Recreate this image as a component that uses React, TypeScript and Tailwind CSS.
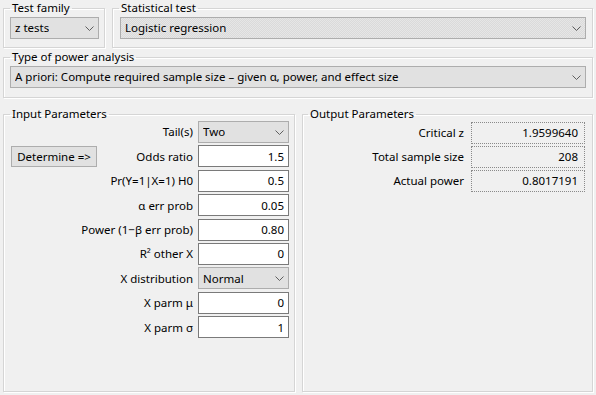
import React from "react";

const font = { fontFamily: '"Noto Sans", "Open Sans", sans-serif' };

function Chevron() {
  return (
    <svg width="9" height="5" viewBox="0 0 9 5" className="shrink-0">
      <polyline points="0.5,0.5 4.5,4.5 8.5,0.5" fill="none" stroke="#5f5f5f" strokeWidth="1" />
    </svg>
  );
}

function Combo({ text, textured, className }: { text: string; textured?: boolean; className?: string }) {
  return (
    <div
      className={
        "flex h-[22px] items-center justify-between border border-[#adadad] pl-[4px] pr-[4px] text-black " +
        (textured
          ? "bg-[repeating-conic-gradient(#e6e6e6_0_25%,#dadada_0_50%)] bg-[length:2px_2px] "
          : "bg-[#e1e1e1] ") +
        (className ?? "")
      }
    >
      <span className="truncate">{text}</span>
      <Chevron />
    </div>
  );
}

function Group({
  title,
  className,
  legendClass,
  children,
}: {
  title: string;
  className?: string;
  legendClass?: string;
  children: React.ReactNode;
}) {
  return (
    <fieldset
      className={
        "min-w-0 border border-[#d5d5d5] shadow-[1px_1px_0_#ffffff,inset_1px_1px_0_#ffffff] " + (className ?? "")
      }
    >
      <legend className={"px-[2px] leading-[16px] text-black " + (legendClass ?? "")}>{title}</legend>
      {children}
    </fieldset>
  );
}

function Field({ value }: { value: string }) {
  return (
    <div className="flex h-[22px] w-[91px] items-center justify-end border border-[#7a7a7a] bg-white pr-[4px]">
      {value}
    </div>
  );
}

function Row({ label, children, left }: { label: string; children: React.ReactNode; left?: React.ReactNode }) {
  return (
    <div className="flex h-[22px] items-center">
      <div className="w-[1px] shrink-0">{left}</div>
      <div className="flex-1 pr-[5px] text-right whitespace-nowrap">{label}</div>
      {children}
    </div>
  );
}

function OutRow({ label, value }: { label: string; value: string }) {
  return (
    <div className="flex h-[22px] items-center">
      <div className="flex-1 pr-[7px] text-right whitespace-nowrap">{label}</div>
      <div className="flex h-[22px] w-[114px] items-center justify-end border border-dotted border-[#8a8a8a] bg-[#f0f0f0] pr-[6px]">
        {value}
      </div>
    </div>
  );
}

export default function App() {
  return (
    <div style={font} className="flex h-[395px] w-[596px] flex-col bg-[#f0f0f0] px-[3px] text-[11.5px] text-black">
      <div className="flex gap-[7px]">
        <Group title="Test family" className="h-[48px] w-[102px] pb-[8px] pl-[6px] pr-[5px]">
          <Combo text="z tests" className="mt-[1px]" />
        </Group>
        <Group title="Statistical test" className="h-[48px] flex-1 pb-[8px] pl-[7px] pr-[6px]" legendClass="-ml-[1px]">
          <Combo text="Logistic regression" textured className="mt-[1px]" />
        </Group>
      </div>
      <Group title="Type of power analysis" className="mt-[1px] h-[49px] pl-[6px] pr-[6px]">
        <Combo text="A priori: Compute required sample size – given α, power, and effect size" className="mt-[1px]" />
      </Group>
      <div className="mt-[8px] flex h-[286px] gap-[7px]">
        <Group title="Input Parameters" className="w-[292px] pr-[5px]" legendClass="ml-[6px]">
          <div className="-mt-[1px] flex flex-col gap-[2.4px]">
            <Row label="Tail(s)">
              <Combo text="Two" className="w-[91px]" />
            </Row>
            <Row
              label="Odds ratio"
              left={
                <div className="ml-[7px] flex h-[21px] w-[86px] items-center justify-center border border-[#adadad] bg-[#e1e1e1] whitespace-nowrap">
                  Determine =&gt;
                </div>
              }
            >
              <Field value="1.5" />
            </Row>
            <Row label="Pr(Y=1|X=1) H0">
              <Field value="0.5" />
            </Row>
            <Row label="α err prob">
              <Field value="0.05" />
            </Row>
            <Row label="Power (1−β err prob)">
              <Field value="0.80" />
            </Row>
            <Row label="R² other X">
              <Field value="0" />
            </Row>
            <Row label="X distribution">
              <Combo text="Normal" className="w-[91px]" />
            </Row>
            <Row label="X parm μ">
              <Field value="0" />
            </Row>
            <Row label="X parm σ">
              <Field value="1" />
            </Row>
          </div>
        </Group>
        <Group title="Output Parameters" className="flex-1 pr-[7px]" legendClass="ml-[5px]">
          <div className="flex flex-col gap-[2px]">
            <OutRow label="Critical z" value="1.9599640" />
            <OutRow label="Total sample size" value="208" />
            <OutRow label="Actual power" value="0.8017191" />
          </div>
        </Group>
      </div>
    </div>
  );
}
